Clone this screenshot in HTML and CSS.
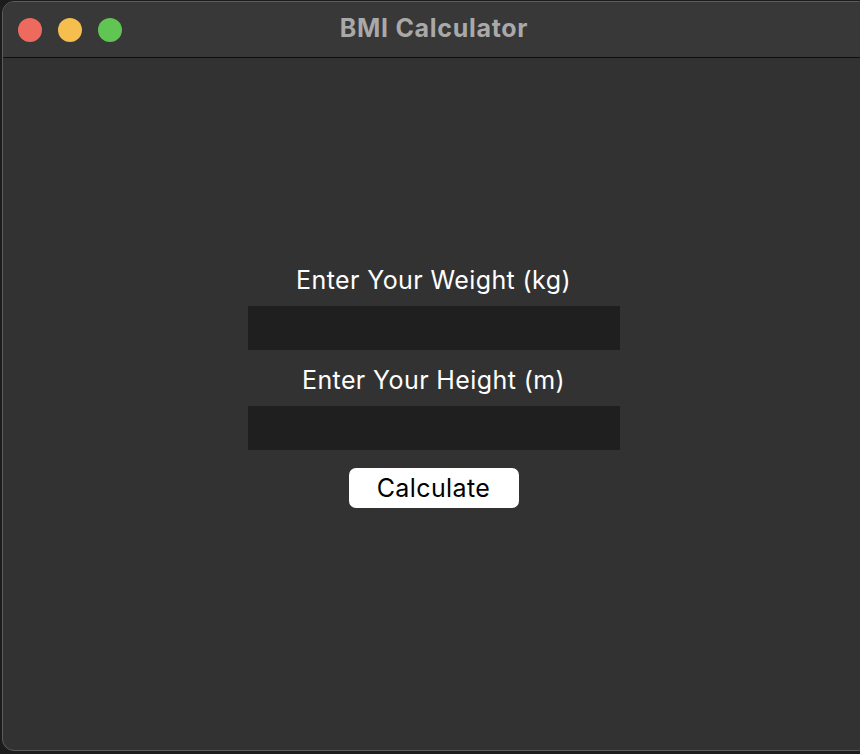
FILE: index.html
```html
<!DOCTYPE html>
<html>
<head>
<meta charset="utf-8">
<link rel="stylesheet" href="styles.css">
</head>
<body>
<div class="window">
  <div class="titlebar">
    <div class="lights">
      <span class="light red"></span>
      <span class="light yellow"></span>
      <span class="light green"></span>
    </div>
    <div class="title">BMI Calculator</div>
  </div>
  <div class="content">
    <div class="label">Enter Your Weight (kg)</div>
    <div class="entry"></div>
    <div class="label second">Enter Your Height (m)</div>
    <div class="entry"></div>
    <button class="btn">Calculate</button>
  </div>
</div>
</body>
</html>
```
FILE: styles.css
```css
html, body {
  margin: 0;
  padding: 0;
  background: #1c1c1c;
  width: 860px;
  height: 754px;
  overflow: hidden;
}
.window {
  margin: 1px 0 0 2px;
  width: 868px;
  height: 750px;
  box-sizing: border-box;
  border: 1px solid #5c5c5c;
  border-radius: 12px;
  background: #323232;
  overflow: hidden;
  display: flex;
  flex-direction: column;
  font-family: Inter, "Liberation Sans", Arial, sans-serif;
}
.titlebar {
  height: 55px;
  background: #383838;
  border-bottom: 1px solid #0e0e0e;
  position: relative;
  display: flex;
  align-items: center;
  flex-shrink: 0;
}
.lights {
  display: flex;
  gap: 16px;
  margin-left: 15px;
  margin-top: 1px;
}
.light {
  width: 24px;
  height: 24px;
  border-radius: 50%;
  display: block;
}
.red { background: #ee6a5f; }
.yellow { background: #f5be4f; }
.green { background: #61c554; }
.title {
  position: absolute;
  left: 0;
  width: 862px;
  top: 0;
  line-height: 52px;
  text-align: center;
  color: #a9a9a9;
  font-weight: bold;
  font-size: 25px;
  letter-spacing: 0.7px;
}
.content {
  flex: 1;
  display: flex;
  flex-direction: column;
  align-items: center;
  padding-top: 207px;
  width: 865px;
  box-sizing: border-box;
  margin-left: -2px;
}
.label {
  color: #ffffff;
  font-size: 25px;
  line-height: 30px;
  height: 30px;
  letter-spacing: 0.4px;
}
.label.second {
  margin-top: 15px;
}
.entry {
  width: 372px;
  height: 44px;
  background: #1f1f1f;
  margin-top: 11px;
}
.btn {
  margin-top: 18px;
  width: 170px;
  height: 40px;
  border: none;
  border-radius: 7px;
  background: #ffffff;
  color: #000000;
  font-family: Inter, "Liberation Sans", Arial, sans-serif;
  font-size: 25px;
  letter-spacing: 0.4px;
  padding: 0;
  line-height: 38px;
}
```
